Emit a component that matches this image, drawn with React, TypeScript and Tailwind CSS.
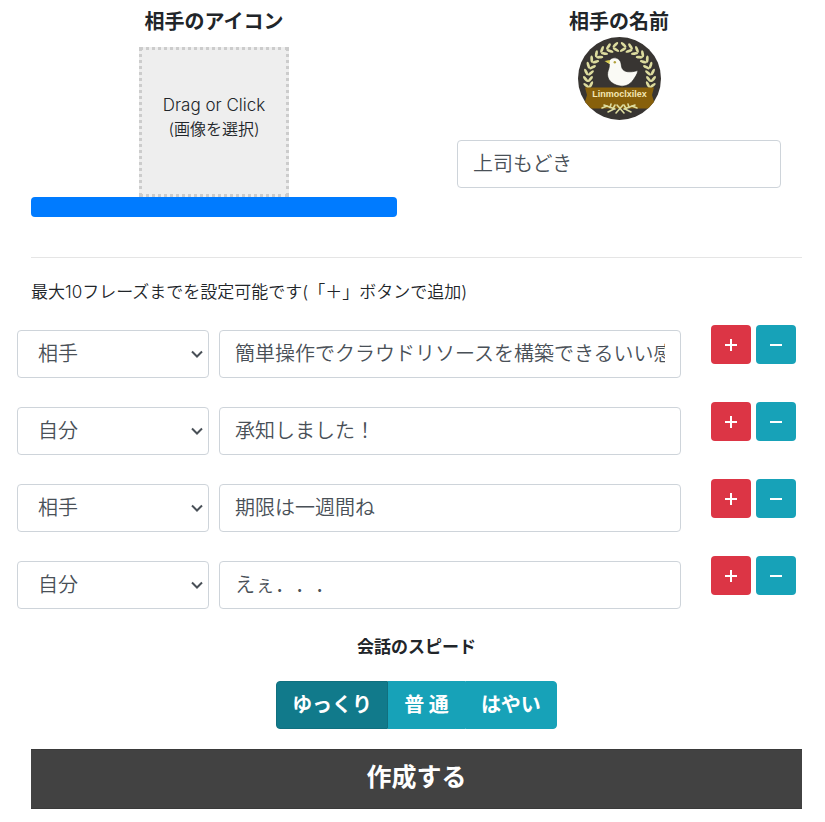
import { useState } from "react";

type Speaker = "partner" | "self";
type Phrase = { id: number; speaker: Speaker; text: string };

const initialPhrases: Phrase[] = [
  { id: 1, speaker: "partner", text: "簡単操作でクラウドリソースを構築できるいい感じのツールを作って" },
  { id: 2, speaker: "self", text: "承知しました！" },
  { id: 3, speaker: "partner", text: "期限は一週間ね" },
  { id: 4, speaker: "self", text: "えぇ．．．" },
];

const speeds = [
  { value: "slow", label: "ゆっくり" },
  { value: "normal", label: "普 通" },
  { value: "fast", label: "はやい" },
];

const fieldClass =
  "h-12 rounded border border-[#ced4da] bg-white text-xl font-[350] text-[#495057] outline-none [text-spacing-trim:space-all] focus:border-[#80bdff]";

// Angles, in degrees from the top, of the leaf pairs of the wreath
const wreathAngles = [7, 19, 31, 43, 55, 67, 79, 91, 102];

function Avatar() {
  return (
    <svg className="size-[83px]" viewBox="0 0 83 83" role="img" aria-label="相手のアイコン">
      <defs>
        <clipPath id="avatar-disc">
          <circle cx="41.5" cy="41.5" r="41.5" />
        </clipPath>
      </defs>
      <g clipPath="url(#avatar-disc)">
        <rect width="83" height="83" fill="#383532" />
        {[1, -1].map((side) => (
          <g key={side} transform={side === 1 ? undefined : "translate(83 0) scale(-1 1)"} fill="#dcdb9e">
            {wreathAngles.map((a) => (
              <g key={a} transform={`rotate(${a} 41.5 41.5)`}>
                <ellipse cx="41.5" cy="7.6" rx="3.6" ry="1.4" transform="rotate(38 41.5 7.6)" />
                <ellipse cx="41.5" cy="12.4" rx="3.6" ry="1.4" transform="rotate(-38 41.5 12.4)" />
              </g>
            ))}
          </g>
        ))}
        <path d="M7 50.500H76L74 58L78 71.500H5L9 58Z" fill="#87600b" />
        <path
          d="M27 24.200L31.500 23.500C33 20.600 37.500 20 40.500 22.200C43.800 24.600 42.800 28.500 44.200 31.500C46 35.200 52 35.800 60 33.500C59 38 57 40 55.500 42.500C52 48 46.500 50 41 48.800C33.500 47.200 28.500 42 29.700 35.500C30.200 32.500 31.800 30.500 31.300 27Z"
          fill="#fafaf5"
          stroke="#24211e"
          strokeWidth="0.6"
        />
        <path d="M26.500 24L32 23L31.500 27Z" fill="#d9cd4e" />
        <circle cx="36.800" cy="25.200" r="1.200" fill="#b3a23c" />
        <text x="41.500" y="60" textAnchor="middle" className="fill-[#f4e7b4] font-[Liberation_Sans] text-[9px] font-bold">
          Linmoclxilex
        </text>
        <g stroke="#dcdb9e" strokeWidth="1.600" fill="none" strokeLinecap="round">
          <path d="M39 68L46 76M45 68L38 76" />
          <path d="M37 72L26 68M46 72L57 68" />
          <path d="M36 72L30 75M32 70.500L33 67M29 69L24 71M47 72L53 75M51 70.500L50 67M54 69L59 71M35 71.500L37 68M48 71.500L46 68" />
        </g>
      </g>
    </svg>
  );
}

export default function App() {
  const [name, setName] = useState("上司もどき");
  const [phrases, setPhrases] = useState(initialPhrases);
  const [speed, setSpeed] = useState("slow");

  const update = (id: number, change: Partial<Phrase>) =>
    setPhrases(phrases.map((p) => (p.id === id ? { ...p, ...change } : p)));

  const addAfter = (index: number) => {
    if (phrases.length >= 10) return;
    const next = [...phrases];
    next.splice(index + 1, 0, { id: Date.now(), speaker: "partner", text: "" });
    setPhrases(next);
  };

  const remove = (id: number) => {
    if (phrases.length > 1) setPhrases(phrases.filter((p) => p.id !== id));
  };

  return (
    <form
      lang="ja"
      onSubmit={(e) => e.preventDefault()}
      className="bg-white pt-[7px] pb-3 font-[Inter,'Noto_Sans_CJK_JP',sans-serif] font-light text-[#212529] [text-spacing-trim:space-all]"
    >
      <div className="pr-[23px] pl-[31px]">
        <div className="grid grid-cols-2 gap-[39px]">
          <section className="flex flex-col items-center">
            <h2 className="text-xl leading-[30px] font-bold">相手のアイコン</h2>
            <label className="mt-2.5 flex size-[150px] cursor-pointer flex-col items-center justify-center border-3 border-dotted border-[#ccc] bg-[#eee] pb-2.5 text-center text-base leading-6">
              <span className="text-[17px]">Drag or Click</span>
              <span className="font-[350]">(画像を選択)</span>
              <input type="file" accept="image/*" className="sr-only" />
            </label>
            <div
              role="progressbar"
              aria-label="アップロード"
              aria-valuenow={100}
              className="h-5 w-full rounded bg-[#007bff]"
            />
          </section>
          <section className="flex flex-col items-center px-[21px]">
            <h2 className="text-xl leading-[30px] font-bold">
              <label htmlFor="partner-name">相手の名前</label>
            </h2>
            <Avatar />
            <input
              id="partner-name"
              value={name}
              onChange={(e) => setName(e.target.value)}
              className={`${fieldClass} mt-5 w-full px-[15px] pb-1`}
            />
          </section>
        </div>
        <hr className="mt-10 border-[#e5e5e5]" />
        <p className="mt-5 text-[17px] leading-7 font-[350]">
          最大10フレーズまでを設定可能です(「＋」ボタンで追加)
        </p>
      </div>

      <ul className="mt-6 flex flex-col gap-[29px] pr-[29px] pl-[17px]">
        {phrases.map((phrase, index) => (
          <li key={phrase.id} className="flex items-start">
            <div className="relative w-48 shrink-0">
              <select
                aria-label="話し手"
                value={phrase.speaker}
                onChange={(e) => update(phrase.id, { speaker: e.target.value as Speaker })}
                className={`${fieldClass} w-full appearance-none px-5`}
              >
                <option value="partner">相手</option>
                <option value="self">自分</option>
              </select>
              <svg
                className="pointer-events-none absolute top-5 right-1.5 h-2 w-3"
                viewBox="0 0 12 8"
                fill="none"
                stroke="#495057"
                strokeWidth="2"
              >
                <path d="M1 1.500L6 6.500L11 1.500" />
              </svg>
            </div>
            <input
              aria-label="フレーズ"
              value={phrase.text}
              onChange={(e) => update(phrase.id, { text: e.target.value })}
              className={`${fieldClass} ml-2.5 min-w-0 flex-1 px-[15px] pb-1`}
            />
            <div className="-mt-[5px] ml-[30px] flex shrink-0 gap-[5px] text-white">
              <button
                type="button"
                aria-label="追加"
                onClick={() => addAfter(index)}
                className="flex h-[39px] w-10 items-center justify-center rounded bg-[#dc3545]"
              >
                <svg className="size-3" viewBox="0 0 12 12" stroke="currentColor" strokeWidth="2">
                  <path d="M6 0V12M0 6H12" />
                </svg>
              </button>
              <button
                type="button"
                aria-label="削除"
                onClick={() => remove(phrase.id)}
                className="flex h-[39px] w-10 items-center justify-center rounded bg-[#17a2b8]"
              >
                <svg className="size-3" viewBox="0 0 12 12" stroke="currentColor" strokeWidth="2">
                  <path d="M0 6H12" />
                </svg>
              </button>
            </div>
          </li>
        ))}
      </ul>

      <div className="pr-[23px] pl-[31px]">
        <fieldset className="mt-6 flex flex-col items-center">
          <legend className="mx-auto text-[17px] leading-7 font-bold">会話のスピード</legend>
          <div className="mt-5 flex text-xl font-bold text-white">
            {speeds.map((s) => (
              <label
                key={s.value}
                className="flex h-12 cursor-pointer items-center border border-[#17a2b8] bg-[#17a2b8] px-[15px] first:rounded-l last:rounded-r has-checked:border-[#10707f] has-checked:bg-[#117a8b]"
              >
                <input
                  type="radio"
                  name="speed"
                  value={s.value}
                  checked={speed === s.value}
                  onChange={() => setSpeed(s.value)}
                  className="sr-only"
                />
                {s.label}
              </label>
            ))}
          </div>
        </fieldset>
        <button
          type="submit"
          className="mt-5 h-[60px] w-full border-y border-[#3a3a3a] bg-[#424242] pb-0.5 text-[25px] font-bold text-white"
        >
          作成する
        </button>
      </div>
    </form>
  );
}
